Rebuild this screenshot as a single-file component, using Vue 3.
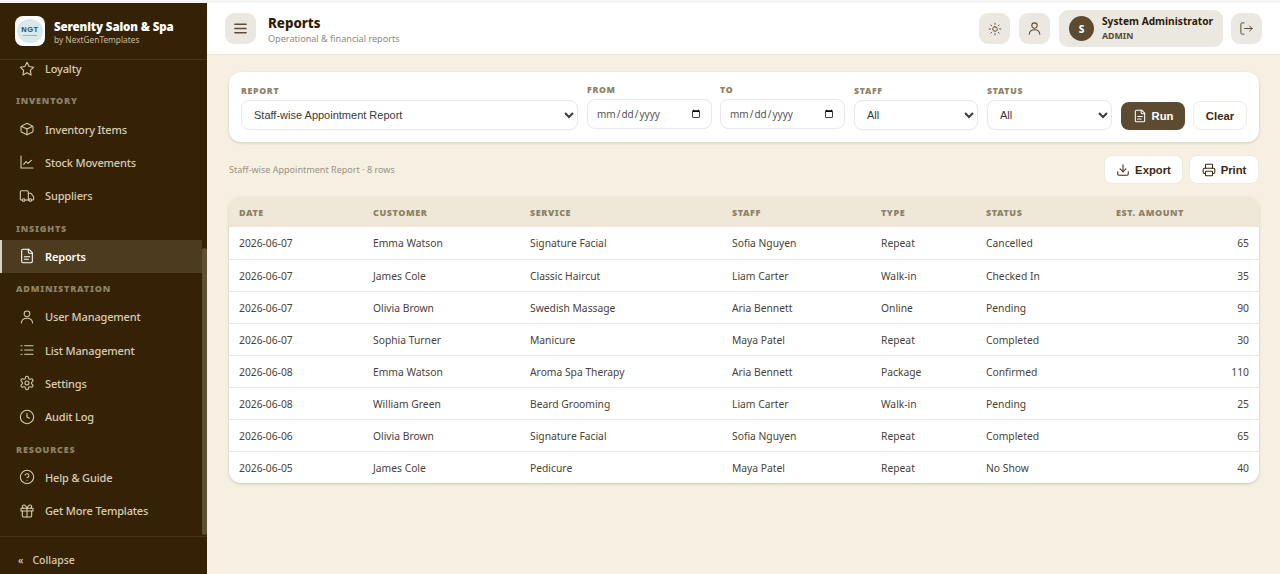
<script setup>
import { h } from 'vue'

const icons = {
  star: ['M12 2l3.09 6.26L22 9.27l-5 4.87 1.18 6.88L12 17.77l-6.18 3.25L7 14.14 2 9.27l6.91-1.01L12 2z'],
  box: ['M12 3.500l7.800 3.800c.7.300 1.200 1 1.200 1.800v6c0 .8-.5 1.500-1.200 1.800L12 20.500l-7.800-3.600C3.500 16.600 3 15.900 3 15.100v-6c0-.8.5-1.500 1.200-1.800L12 3.500z', 'M3.500 7.800L12 12l8.500-4.200', 'M12 12v8.500'],
  chart: ['M3 3v18h18', 'M7 15.500l3.500-4 3 2.500 5-4.500'],
  truck: ['M14 18V6a2 2 0 0 0-2-2H4a2 2 0 0 0-2 2v11a1 1 0 0 0 1 1h2', 'M15 18H9', 'M19 18h2a1 1 0 0 0 1-1v-3.650a1 1 0 0 0-.22-.62l-3.480-4.350A1 1 0 0 0 17.520 8H14', 'M9 18a2 2 0 1 1-4 0 2 2 0 0 1 4 0z', 'M19 18a2 2 0 1 1-4 0 2 2 0 0 1 4 0z'],
  file: ['M15 2H6a2 2 0 0 0-2 2v16a2 2 0 0 0 2 2h12a2 2 0 0 0 2-2V7z', 'M14 2v4a2 2 0 0 0 2 2h4', 'M8 13h8', 'M8 17h6'],
  user: ['M12 3a4.300 4.300 0 1 1 0 8.600A4.300 4.300 0 0 1 12 3z', 'M3.500 21c.6-4.800 4-7 8.500-7s7.900 2.200 8.500 7'],
  list: ['M8.500 5.500H21', 'M8.500 12H21', 'M8.500 18.500H21', 'M3 5.500h1.500', 'M3 12h1.500', 'M3 18.500h1.500'],
  gear: ['M12.220 2h-.44a2 2 0 0 0-2 2v.18a2 2 0 0 1-1 1.730l-.43.25a2 2 0 0 1-2 0l-.15-.08a2 2 0 0 0-2.730.73l-.22.38a2 2 0 0 0 .73 2.730l.15.1a2 2 0 0 1 1 1.720v.51a2 2 0 0 1-1 1.740l-.15.09a2 2 0 0 0-.73 2.730l.22.38a2 2 0 0 0 2.730.73l.15-.08a2 2 0 0 1 2 0l.43.25a2 2 0 0 1 1 1.730V20a2 2 0 0 0 2 2h.44a2 2 0 0 0 2-2v-.18a2 2 0 0 1 1-1.730l.43-.25a2 2 0 0 1 2 0l.15.08a2 2 0 0 0 2.730-.73l.22-.39a2 2 0 0 0-.73-2.730l-.15-.08a2 2 0 0 1-1-1.740v-.5a2 2 0 0 1 1-1.740l.15-.09a2 2 0 0 0 .73-2.730l-.22-.38a2 2 0 0 0-2.730-.73l-.15.08a2 2 0 0 1-2 0l-.43-.25a2 2 0 0 1-1-1.730V4a2 2 0 0 0-2-2z', 'M12 9a3 3 0 1 1 0 6 3 3 0 0 1 0-6z'],
  clock: ['M12 2a10 10 0 1 1 0 20 10 10 0 0 1 0-20z', 'M12 6.500V12l3.500 2'],
  help: ['M12 2a10 10 0 1 1 0 20 10 10 0 0 1 0-20z', 'M9.100 9a3 3 0 0 1 5.800 1c0 2-3 3-3 3', 'M12 17h.01'],
  gift: ['M3 8h18v4H3z', 'M12 8v13', 'M19 12v7a2 2 0 0 1-2 2H7a2 2 0 0 1-2-2v-7', 'M7.500 8a2.500 2.500 0 0 1 0-5C10 3 12 8 12 8s2-5 4.500-5a2.500 2.500 0 0 1 0 5'],
  sun: ['M12 8a4 4 0 1 1 0 8 4 4 0 0 1 0-8z', 'M12 2v2', 'M12 20v2', 'M4.900 4.900l1.400 1.400', 'M17.700 17.700l1.400 1.400', 'M2 12h2', 'M20 12h2', 'M6.300 17.700l-1.400 1.400', 'M19.100 4.900l-1.400 1.400'],
  logout: ['M8 3H5a2 2 0 0 0-2 2v14a2 2 0 0 0 2 2h3', 'M17 16l4-4-4-4', 'M21 12H9'],
  download: ['M21 15v4a2 2 0 0 1-2 2H5a2 2 0 0 1-2-2v-4', 'M7 10l5 5 5-5', 'M12 15V3'],
  printer: ['M6 18H4a2 2 0 0 1-2-2v-5a2 2 0 0 1 2-2h16a2 2 0 0 1 2 2v5a2 2 0 0 1-2 2h-2', 'M6 9V3a1 1 0 0 1 1-1h10a1 1 0 0 1 1 1v6', 'M7 14h10a1 1 0 0 1 1 1v6a1 1 0 0 1-1 1H7a1 1 0 0 1-1-1v-6a1 1 0 0 1 1-1z'],
  menu: ['M4 6h16', 'M4 12h16', 'M4 18h16']
}

const Icon = (props) =>
  h('svg', { viewBox: '0 0 24 24', width: props.size || 16, height: props.size || 16, fill: 'none', stroke: 'currentColor', 'stroke-width': props.sw || 1.8, 'stroke-linecap': 'round', 'stroke-linejoin': 'round' },
    icons[props.name].map((d) => h('path', { d })))
Icon.props = ['name', 'size', 'sw']

const nav = [
  { items: [{ icon: 'star', label: 'Loyalty' }] },
  { title: 'INVENTORY', items: [
    { icon: 'box', label: 'Inventory Items' },
    { icon: 'chart', label: 'Stock Movements' },
    { icon: 'truck', label: 'Suppliers' }
  ] },
  { title: 'INSIGHTS', items: [{ icon: 'file', label: 'Reports', active: true }] },
  { title: 'ADMINISTRATION', items: [
    { icon: 'user', label: 'User Management' },
    { icon: 'list', label: 'List Management' },
    { icon: 'gear', label: 'Settings' },
    { icon: 'clock', label: 'Audit Log' }
  ] },
  { title: 'RESOURCES', items: [
    { icon: 'help', label: 'Help & Guide' },
    { icon: 'gift', label: 'Get More Templates' }
  ] }
]

const columns = ['DATE', 'CUSTOMER', 'SERVICE', 'STAFF', 'TYPE', 'STATUS', 'EST. AMOUNT']
const widths = [134, 157, 202, 149, 105, 130, 153]

const rows = [
  ['2026-06-07', 'Emma Watson', 'Signature Facial', 'Sofia Nguyen', 'Repeat', 'Cancelled', 65],
  ['2026-06-07', 'James Cole', 'Classic Haircut', 'Liam Carter', 'Walk-in', 'Checked In', 35],
  ['2026-06-07', 'Olivia Brown', 'Swedish Massage', 'Aria Bennett', 'Online', 'Pending', 90],
  ['2026-06-07', 'Sophia Turner', 'Manicure', 'Maya Patel', 'Repeat', 'Completed', 30],
  ['2026-06-08', 'Emma Watson', 'Aroma Spa Therapy', 'Aria Bennett', 'Package', 'Confirmed', 110],
  ['2026-06-08', 'William Green', 'Beard Grooming', 'Liam Carter', 'Walk-in', 'Pending', 25],
  ['2026-06-06', 'Olivia Brown', 'Signature Facial', 'Sofia Nguyen', 'Repeat', 'Completed', 65],
  ['2026-06-05', 'James Cole', 'Pedicure', 'Maya Patel', 'Repeat', 'No Show', 40]
]
</script>

<template>
  <div class="app">
    <aside class="sidebar">
      <div class="brand">
        <div class="logo">
          <div class="logo-disc"><span class="logo-text">NGT</span><i class="logo-line"></i></div>
        </div>
        <div>
          <div class="brand-name">Serenity Salon &amp; Spa</div>
          <div class="brand-sub">by NextGenTemplates</div>
        </div>
      </div>
      <nav class="nav">
        <div class="nav-inner">
          <template v-for="group in nav" :key="group.title || 'top'">
            <div v-if="group.title" class="nav-title">{{ group.title }}</div>
            <a v-for="item in group.items" :key="item.label" class="nav-item" :class="{ active: item.active }">
              <Icon :name="item.icon" :size="16" :sw="1.6" />
              <span>{{ item.label }}</span>
            </a>
          </template>
        </div>
        <div class="scrollbar"><div class="thumb"></div></div>
      </nav>
      <div class="collapse"><span class="chev">«</span><span>Collapse</span></div>
    </aside>

    <div class="main">
      <header class="topbar">
        <button class="icon-btn"><Icon name="menu" :size="17" :sw="1.8" /></button>
        <div class="page-title">
          <h1>Reports</h1>
          <p>Operational &amp; financial reports</p>
        </div>
        <div class="top-actions">
          <button class="icon-btn"><Icon name="sun" :size="14" :sw="1.6" /></button>
          <button class="icon-btn"><Icon name="user" :size="15" :sw="1.7" /></button>
          <div class="user-chip">
            <div class="avatar">S</div>
            <div>
              <div class="user-name">System Administrator</div>
              <div class="user-role">ADMIN</div>
            </div>
          </div>
          <button class="icon-btn"><Icon name="logout" :size="15" :sw="1.6" /></button>
        </div>
      </header>

      <main class="content">
        <section class="filters">
          <label class="field report">
            <span>REPORT</span>
            <select><option>Staff-wise Appointment Report</option></select>
          </label>
          <label class="field date">
            <span>FROM</span>
            <input type="date" />
          </label>
          <label class="field date">
            <span>TO</span>
            <input type="date" />
          </label>
          <label class="field small">
            <span>STAFF</span>
            <select><option>All</option></select>
          </label>
          <label class="field small status">
            <span>STATUS</span>
            <select><option>All</option></select>
          </label>
          <button class="btn primary"><Icon name="file" :size="14" :sw="1.8" />Run</button>
          <button class="btn clear">Clear</button>
        </section>

        <div class="result-bar">
          <span class="result-text">Staff-wise Appointment Report · 8 rows</span>
          <div class="result-actions">
            <button class="btn export"><Icon name="download" :size="14" :sw="1.8" />Export</button>
            <button class="btn print"><Icon name="printer" :size="14" :sw="1.8" />Print</button>
          </div>
        </div>

        <div class="table-card">
          <table>
            <colgroup>
              <col v-for="w in widths" :key="w" :style="{ width: w + 'px' }" />
            </colgroup>
            <thead>
              <tr><th v-for="c in columns" :key="c">{{ c }}</th></tr>
            </thead>
            <tbody>
              <tr v-for="(row, i) in rows" :key="i">
                <td v-for="(cell, j) in row" :key="j" :class="{ num: j === 6 }">{{ cell }}</td>
              </tr>
            </tbody>
          </table>
        </div>
      </main>
    </div>
  </div>
</template>

<style>
html, body {
  margin: 0;
  background: #f6f0e2;
}
</style>

<style scoped>
.app {
  display: flex;
  height: 574px;
  overflow: hidden;
  box-sizing: border-box;
  border-top: 3px solid #f5f5f5;
  font-family: "Noto Sans", "Open Sans", sans-serif;
}

.sidebar {
  width: 207px;
  flex-shrink: 0;
  display: flex;
  flex-direction: column;
  background: #352206;
  color: #d9ccb3;
}

.brand {
  height: 57px;
  box-sizing: border-box;
  display: flex;
  align-items: center;
  gap: 9px;
  padding: 0 15px;
  border-bottom: 1px solid #463417;
}

.logo {
  width: 30px;
  height: 30px;
  border-radius: 8px;
  background: #fff;
  display: flex;
  align-items: center;
  justify-content: center;
}

.logo-disc {
  width: 26px;
  height: 24px;
  border-radius: 50%;
  background: #d9e8ea;
  display: flex;
  flex-direction: column;
  align-items: center;
  justify-content: center;
  gap: 1px;
}

.logo-text {
  font-size: 7.500px;
  line-height: 8px;
  font-weight: 800;
  letter-spacing: 0.6px;
  color: #1c5368;
  font-family: "Liberation Sans", sans-serif;
}

.logo-line {
  width: 14px;
  height: 1px;
  background: #9db4bb;
}

.brand-name {
  font-size: 11.500px;
  font-weight: 900;
  letter-spacing: -0.1px;
  color: #fff;
  line-height: 15px;
  margin-top: 1px;
  white-space: nowrap;
}

.brand-sub {
  font-size: 8.300px;
  color: #c6b9a0;
  line-height: 11px;
}

.nav {
  flex: 1;
  min-height: 0;
  overflow: hidden;
  position: relative;
}

.nav-inner {
  margin-top: -8px;
  width: 202px;
}

.nav-title {
  height: 27px;
  box-sizing: border-box;
  padding: 9px 0 0 16px;
  line-height: 13px;
  font-size: 9px;
  font-weight: 900;
  letter-spacing: 0.8px;
  color: #8d8166;
}

.nav-item {
  height: 33.400px;
  box-sizing: border-box;
  display: flex;
  align-items: center;
  gap: 10px;
  padding-left: 19px;
  font-size: 11px;
  letter-spacing: -0.15px;
  font-weight: 500;
  white-space: nowrap;
}

.nav-item.active {
  background: #4c3b1e;
  border-left: 2px solid #d9d2c2;
  padding-left: 17px;
  color: #fff;
  font-weight: 600;
}

.scrollbar {
  position: absolute;
  top: 0;
  right: 0;
  bottom: 0;
  width: 5px;
}

.thumb {
  position: absolute;
  top: 188px;
  bottom: 1px;
  left: 0;
  right: 0;
  background: #5f4f34;
  border-radius: 3px;
}

.collapse {
  height: 38px;
  box-sizing: border-box;
  border-top: 1px solid #463417;
  display: flex;
  align-items: center;
  gap: 9px;
  padding: 8px 0 0 18px;
  font-size: 10.500px;
  font-weight: 500;
}

.chev {
  font-size: 10px;
}

.main {
  flex: 1;
  min-width: 0;
  display: flex;
  flex-direction: column;
}

.topbar {
  height: 52px;
  flex-shrink: 0;
  box-sizing: border-box;
  background: #fff;
  border-bottom: 1px solid #ece6d9;
  display: flex;
  align-items: center;
  gap: 12px;
  padding: 0 18px;
}

.icon-btn {
  width: 31px;
  height: 31px;
  padding: 0;
  border: 0;
  border-radius: 9px;
  background: #ebe8e2;
  color: #5c4b30;
  display: flex;
  align-items: center;
  justify-content: center;
}

.page-title {
  padding-top: 2px;
}

.page-title h1 {
  margin: 0;
  font-size: 13.300px;
  line-height: 17px;
  font-weight: 800;
  color: #2d1c05;
}

.page-title p {
  margin: 0;
  font-size: 9.100px;
  line-height: 13px;
  color: #8f8a80;
}

.top-actions {
  margin-left: auto;
  display: flex;
  align-items: center;
  gap: 9px;
}

.user-chip {
  display: flex;
  align-items: center;
  gap: 8px;
  height: 37px;
  width: 164px;
  box-sizing: border-box;
  padding-left: 10px;
  border-radius: 9px;
  background: #ebe8e2;
  margin-right: -1px;
}

.avatar {
  width: 25px;
  height: 25px;
  border-radius: 50%;
  background: #5c4b30;
  color: #fff;
  font-size: 10px;
  font-weight: 800;
  display: flex;
  align-items: center;
  justify-content: center;
}

.user-name {
  font-size: 10.200px;
  font-weight: 700;
  color: #2d1c05;
  line-height: 15px;
  white-space: nowrap;
}

.user-role {
  font-size: 8.800px;
  font-weight: 700;
  color: #5c4b30;
  line-height: 14px;
}

.content {
  flex: 1;
  padding: 17px 21px 0 22px;
  background: #f6f0e2;
}

.filters {
  height: 70px;
  box-sizing: border-box;
  background: #fff;
  border-radius: 12px;
  box-shadow: 0 1px 3px rgba(90, 70, 30, 0.2);
  display: flex;
  align-items: flex-end;
  padding: 0 12px 12px;
  gap: 8px;
}

.field {
  display: flex;
  flex-direction: column;
  gap: 2px;
}

.field span {
  font-size: 8.700px;
  font-weight: 900;
  letter-spacing: 0.7px;
  color: #8d8166;
  line-height: 13px;
}

.field select,
.field input {
  width: 100%;
  height: 30px;
  box-sizing: border-box;
  border: 1px solid #ece9e4;
  border-radius: 8px;
  background: #fff;
  color: #3a3a3a;
  font-family: "Liberation Sans", sans-serif;
  font-size: 11px;
  padding: 0 8px;
  outline: none;
}

.report {
  width: 337px;
}

.date {
  width: 125px;
  margin-bottom: 1px;
}

.date:nth-child(2) {
  margin-left: 1px;
}

.small {
  width: 124px;
}

.date + .small {
  margin-left: 1px;
}

.small.status {
  width: 125px;
  margin-left: 1px;
}

.field input {
  font-family: "Noto Sans", sans-serif;
  font-size: 10px;
  color: #555;
}

.btn {
  height: 29px;
  box-sizing: border-box;
  display: inline-flex;
  align-items: center;
  justify-content: center;
  gap: 5px;
  padding: 0;
  border: 1px solid #f0ebe2;
  border-radius: 8px;
  background: #fff;
  color: #3a2b14;
  font-family: "Liberation Sans", sans-serif;
  font-size: 11.300px;
  font-weight: 700;
}

.btn.primary {
  width: 64px;
  height: 28px;
  margin-left: 1px;
  border: 0;
  background: #5c4b30;
  color: #fff;
}

.btn.clear {
  width: 54px;
}

.btn.export {
  width: 79px;
}

.btn.print {
  width: 70px;
}

.result-bar {
  display: flex;
  align-items: center;
  justify-content: space-between;
  margin-top: 13px;
  height: 29px;
}

.result-text {
  font-size: 9.050px;
  color: #9a9282;
}

.result-actions {
  display: flex;
  gap: 6px;
}

.table-card {
  margin-top: 13px;
  background: #fff;
  border-radius: 12px;
  overflow: hidden;
  box-shadow: 0 1px 3px rgba(90, 70, 30, 0.25);
}

table {
  width: 100%;
  border-collapse: collapse;
  table-layout: fixed;
}

th {
  height: 30px;
  padding: 0 10px;
  background: #efe7d7;
  text-align: left;
  font-size: 9px;
  font-weight: 900;
  letter-spacing: 0.55px;
  color: #8d8166;
}

td {
  height: 32px;
  box-sizing: border-box;
  padding: 1px 10px 0;
  border-bottom: 1px solid #ece9e3;
  font-size: 10.300px;
  color: #4b4236;
}

tr:last-child td {
  border-bottom: 0;
}

td.num {
  text-align: right;
}
</style>
